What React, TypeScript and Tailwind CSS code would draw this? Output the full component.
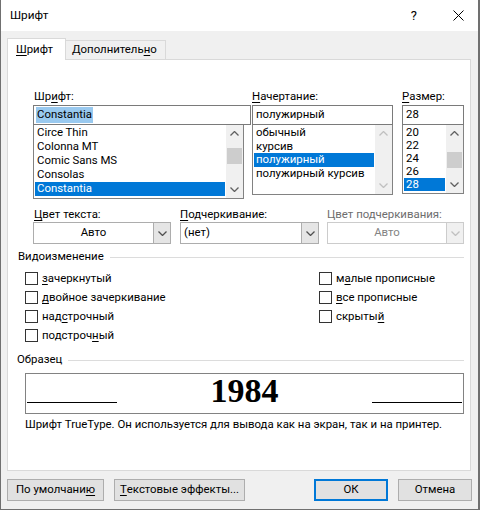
import type { ReactNode } from "react"

const fontItems = ["Circe Thin", "Colonna MT", "Comic Sans MS", "Consolas", "Constantia"]
const styleItems = ["обычный", "курсив", "полужирный", "полужирный курсив"]
const sizeItems = ["20", "22", "24", "26", "28"]

function Chevron({ up, color = "#606060" }: { up?: boolean; color?: string }) {
  return (
    <svg width="9" height="5" viewBox="0 0 9 5" fill="none">
      <path d={up ? "M0.5 4.5L4.5 0.5L8.5 4.5" : "M0.5 0.5L4.5 4.5L8.5 0.5"} stroke={color} strokeWidth="1.3" />
    </svg>
  )
}

function ScrollBar({ thumbTop, disabled }: { thumbTop?: number; disabled?: boolean }) {
  const c = disabled ? "#c0c0c0" : "#606060"
  return (
    <div className="flex h-full w-[17px] shrink-0 flex-col bg-[#f0f0f0]">
      <div className="flex h-[17px] items-center justify-center">
        <Chevron up color={c} />
      </div>
      <div className="flex-1">
        {thumbTop !== undefined && (
          <div className="mx-px bg-[#cdcdcd]" style={{ marginTop: thumbTop, height: 16 }} />
        )}
      </div>
      <div className="flex h-[17px] items-center justify-center">
        <Chevron color={c} />
      </div>
    </div>
  )
}

function Acc({ children }: { children: ReactNode }) {
  return <span className="underline underline-offset-2">{children}</span>
}

function CheckRow({ children }: { children: ReactNode }) {
  return (
    <div className="flex h-[19px] items-center gap-[4px] whitespace-nowrap">
      <div className="h-[13px] w-[13px] border border-[#333]" />
      <span>{children}</span>
    </div>
  )
}

function GroupHeader({ title }: { title: string }) {
  return (
    <div className="flex h-[14px] items-center gap-[6px] pr-[6px]">
      <span>{title}</span>
      <div className="h-px flex-1 bg-[#dcdcdc]" />
    </div>
  )
}

function Button({ children, primary, w }: { children: ReactNode; primary?: boolean; w: string }) {
  return (
    <div
      className={`flex h-[22px] items-center justify-center whitespace-nowrap bg-[#e1e1e1] ${w} ${
        primary ? "border-2 border-[#0078d7]" : "border border-[#adadad]"
      }`}
    >
      {children}
    </div>
  )
}

export default function App() {
  return (
    <div className="flex h-[510px] w-[480px] flex-col overflow-hidden border-l border-r-2 border-b border-[#707070] bg-[#f0f0f0] font-['Roboto',sans-serif] text-[11.4px] leading-none text-black">
      {/* title bar */}
      <div className="flex h-[31px] shrink-0 items-center bg-white pl-[9px]">
        <span className="flex-1 text-[11.8px]">Шрифт</span>
        <span className="mr-[36px] text-[13px]">?</span>
        <svg className="mr-[14px]" width="11" height="11" viewBox="0 0 11 11">
          <path d="M0.5 0.5L10.5 10.5M10.5 0.5L0.5 10.5" stroke="#000" strokeWidth="1" />
        </svg>
      </div>

      <div className="flex flex-col px-[6px] pt-[7px]">
        {/* tabs */}
        <div className="flex h-[21px] items-end">
          <div className="relative z-10 -mb-px flex h-[22px] w-[59px] items-center border border-b-0 border-[#d9d9d9] bg-white pl-[8px]">
            <Acc>Ш</Acc>рифт
          </div>
          <div className="flex h-[19px] w-[100px] items-center border border-b-0 border-l-0 border-[#d9d9d9] pl-[6px]">
            Дополнитель<Acc>н</Acc>о
          </div>
        </div>

        {/* panel */}
        <div className="flex h-[412px] w-[464px] flex-col border border-[#d9d9d9] bg-white">
          <div className="mt-[29px] flex items-start pl-[25px]">
            <div className="flex w-[218px] flex-col">
              <div className="flex h-[16px] items-center pl-px">
                Шр<Acc>и</Acc>фт:
              </div>
              <div className="flex h-[20px] items-center border border-[#7a7a7a] pl-[2px]">
                <span className="bg-[#99c9ef] px-px py-[2px]">Constantia</span>
              </div>
              <div className="flex h-[74px] w-[211px] border border-t-0 border-[#828282]">
                <div className="flex-1 pt-px">
                  {fontItems.map((f, i) => (
                    <div
                      key={f}
                      className={`mx-px flex h-[14px] items-center whitespace-nowrap pl-[2px] ${
                        i === 4 ? "bg-[#0078d7] text-white" : ""
                      }`}
                    >
                      {f}
                    </div>
                  ))}
                </div>
                <ScrollBar thumbTop={6} />
              </div>
            </div>

            <div className="ml-px flex w-[141px] flex-col">
              <div className="flex h-[16px] items-center">
                <Acc>Н</Acc>ачертание:
              </div>
              <div className="flex h-[20px] items-center border border-[#7a7a7a] pl-[3px]">полужирный</div>
              <div className="flex h-[70px] border border-t-0 border-[#828282]">
                <div className="flex-1 pt-px">
                  {styleItems.map((s, i) => (
                    <div
                      key={s}
                      className={`mx-px flex h-[13.5px] items-center whitespace-nowrap pl-[2px] ${
                        i === 2 ? "bg-[#0078d7] text-white" : ""
                      }`}
                    >
                      {s}
                    </div>
                  ))}
                </div>
                <ScrollBar disabled />
              </div>
            </div>

            <div className="ml-[9px] flex w-[62px] flex-col">
              <div className="flex h-[16px] items-center">
                <Acc>Р</Acc>азмер:
              </div>
              <div className="flex h-[20px] items-center border border-[#7a7a7a] pl-[3px]">28</div>
              <div className="flex h-[69px] border border-t-0 border-[#828282]">
                <div className="flex-1 pt-px">
                  {sizeItems.map((s, i) => (
                    <div
                      key={s}
                      className={`mx-px flex h-[13px] items-center pl-[2px] ${
                        i === 4 ? "bg-[#0078d7] text-white" : ""
                      }`}
                    >
                      {s}
                    </div>
                  ))}
                </div>
                <ScrollBar thumbTop={10} />
              </div>
            </div>
          </div>

          {/* colour / underline row */}
          <div className="mt-[8px] flex pl-[25px]">
            <div className="flex w-[138px] flex-col">
              <div className="flex h-[15px] items-center pl-px">
                <Acc>Ц</Acc>вет текста:
              </div>
              <div className="flex h-[22px] border border-[#adadad]">
                <div className="flex flex-1 items-center justify-center">Авто</div>
                <div className="flex w-[17px] items-center justify-center border-l border-[#adadad] bg-[#e5e5e5]">
                  <Chevron color="#505050" />
                </div>
              </div>
            </div>
            <div className="ml-[9px] flex w-[139px] flex-col">
              <div className="flex h-[15px] items-center">
                <Acc>П</Acc>одчеркивание:
              </div>
              <div className="flex h-[22px] border border-[#adadad]">
                <div className="flex flex-1 items-center pl-[3px]">(нет)</div>
                <div className="flex w-[17px] items-center justify-center border-l border-[#adadad] bg-[#e5e5e5]">
                  <Chevron color="#505050" />
                </div>
              </div>
            </div>
            <div className="ml-[8px] flex w-[137px] flex-col">
              <div className="flex h-[15px] items-center whitespace-nowrap text-[#6d6d6d]">Цвет подчеркивания:</div>
              <div className="flex h-[22px] border border-[#cccccc]">
                <div className="flex flex-1 items-center justify-center text-[#838383]">Авто</div>
                <div className="flex w-[17px] items-center justify-center border-l border-[#cccccc] bg-[#f0f0f0]">
                  <Chevron color="#c0c0c0" />
                </div>
              </div>
            </div>
          </div>

          {/* effects */}
          <div className="mt-[6px] pl-[10px]">
            <GroupHeader title="Видоизменение" />
          </div>
          <div className="mt-[5px] flex pl-[17px]">
            <div className="flex w-[294px] flex-col">
              <CheckRow>
                <Acc>з</Acc>ачеркнутый
              </CheckRow>
              <CheckRow>
                <Acc>д</Acc>войное зачеркивание
              </CheckRow>
              <CheckRow>
                над<Acc>с</Acc>трочный
              </CheckRow>
              <CheckRow>
                подстроч<Acc>н</Acc>ый
              </CheckRow>
            </div>
            <div className="flex flex-col">
              <CheckRow>
                м<Acc>а</Acc>лые прописные
              </CheckRow>
              <CheckRow>
                <Acc>в</Acc>се прописные
              </CheckRow>
              <CheckRow>
                скрыты<Acc>й</Acc>
              </CheckRow>
            </div>
          </div>

          {/* sample */}
          <div className="mt-[8px] pl-[9px]">
            <GroupHeader title="Образец" />
          </div>
          <div className="ml-[17px] mt-[6px] flex h-[41px] w-[439px] items-end justify-between border border-[#828282] px-px pb-[10px]">
            <div className="h-px w-[90px] bg-black" />
            <span className="mb-[-5px] font-['Liberation_Serif',serif] text-[34px] font-bold">1984</span>
            <div className="h-px w-[90px] bg-black" />
          </div>
          <div className="mt-[3px] flex h-[15px] items-center whitespace-nowrap pl-[17px]">
            Шрифт TrueType. Он используется для вывода как на экран, так и на принтер.
          </div>
        </div>

        {/* buttons */}
        <div className="mt-[8px] flex items-center">
          <Button w="w-[97px]">
            По умолчани<Acc>ю</Acc>
          </Button>
          <div className="ml-[10px]">
            <Button w="w-[131px]">
              <Acc>Т</Acc>екстовые эффекты...
            </Button>
          </div>
          <div className="ml-[69px]">
            <Button primary w="w-[74px]">
              ОК
            </Button>
          </div>
          <div className="ml-[10px]">
            <Button w="w-[74px]">Отмена</Button>
          </div>
        </div>
      </div>
    </div>
  )
}
